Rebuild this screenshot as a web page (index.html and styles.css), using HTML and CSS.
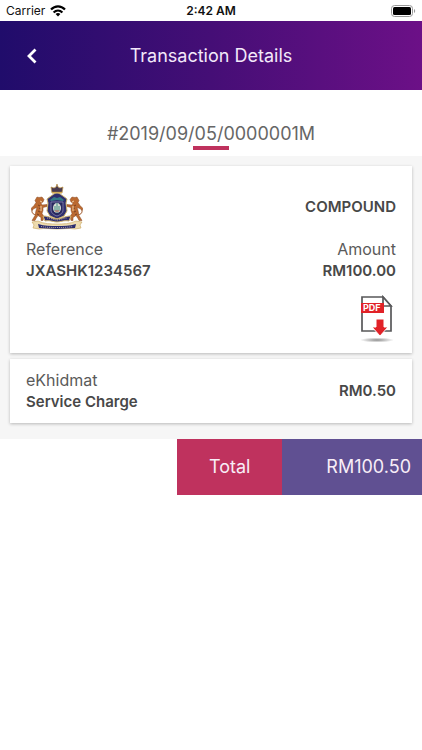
FILE: index.html
```html
<!DOCTYPE html>
<html lang="en">
<head>
    <meta charset="UTF-8">
    <meta name="viewport" content="width=device-width, initial-scale=1.0">
    <title>Transaction Details</title>
    <link rel="stylesheet" href="styles.css">
</head>
<body>
    <!-- Status bar -->
    <div class="status-bar">
        <div class="carrier">
            <span>Carrier</span>
            <svg width="16" height="12" viewBox="0 0 16 12" aria-hidden="true">
                <g fill="none" stroke="#000" stroke-width="2.2">
                    <path d="M1 4.6C5 .3 11 .3 15 4.6"/>
                    <path d="M3.6 7.5c2.6-2.6 6.2-2.6 8.8 0"/>
                </g>
                <path d="M8 11.5 5.6 9c1.4-1.2 3.4-1.2 4.8 0z"/>
            </svg>
        </div>
        <time class="clock">2:42 AM</time>
        <svg class="battery" width="25" height="12" viewBox="0 0 25 12" aria-hidden="true">
            <rect x=".5" y=".5" width="21" height="11" rx="3" fill="#fff" stroke="#999"/>
            <rect x="2" y="2" width="18" height="8" rx="1.5"/>
            <path d="M23 4c1.6.6 1.6 3.4 0 4z" fill="#999"/>
        </svg>
    </div>

    <!-- Header -->
    <header>
        <button class="back-btn" type="button" aria-label="Back">
            <svg width="12" height="16" viewBox="0 0 12 16" aria-hidden="true">
                <path d="M9.5 1.5 3 8l6.5 6.5" fill="none" stroke="#fff" stroke-width="2.8"/>
            </svg>
        </button>
        <h1>Transaction Details</h1>
    </header>

    <main>
        <h2 class="receipt-no">#2019/09/05/0000001M</h2>

        <section class="items">
            <!-- Compound card -->
            <article class="card">
                <div class="row">
                    <svg class="crest" width="52" height="50" viewBox="0 0 52 50" role="img" aria-label="Council crest">
                        <!-- crown -->
                        <path d="M20 5l3 1 2-1 1-3 1 3 2 1 3-1-1 6H21z" fill="#4a3b50" stroke="#bd9347" stroke-width=".7"/>
                        <path d="M21 10.5h10" stroke="#d6ac50" stroke-width="1.3"/>
                        <!-- tigers -->
                        <g id="tiger">
                            <path d="M5 33c-5-1-5-5-2-8" fill="none" stroke="#9d5425" stroke-width="1"/>
                            <path d="M6 15l2 .5 3-.5 2 2.5-1 2.500-2 1 1 2 5-.5 0 2-4 1 0 3-1 3 2 3-1 4-2 0 0-3-3-2-2 3-1 2-3 0 3-5 1-5 1-3-3 1-2 2-1-2 3-3 2-3-1-2z" fill="#bb6a31" stroke="#8a4b25" stroke-width=".5"/>
                            <path d="M7 23l2 1M8 26l2 1M7 29l2 1M6 32l2 1" stroke="#5a2f20" stroke-width=".7"/>
                            <path d="M9 19l2 1M10 24v5" fill="none" stroke="#f1cda0" stroke-width="1"/>
                        </g>
                        <use href="#tiger" transform="matrix(-1 0 0 1 52 0)"/>
                        <!-- shield -->
                        <path d="M26 11c3 0 4 2 6 3l4 3-1 4 1 8-3 5-7 3-7-3-3-5 1-8-1-4 4-3c2-1 3-3 6-3z" fill="#30306f" stroke="#d0b66c" stroke-width="1"/>
                        <path d="M19 18l4-3 3 1 3-1 4 3-1 1-6-1-6 1z" fill="#357c86"/>
                        <path d="M20 20h12v8c0 3-3 5-6 6-3-1-6-3-6-6z" fill="#29295f" stroke="#8b88b4" stroke-width=".8"/>
                        <ellipse cx="26" cy="26" rx="4" ry="5" fill="#d7ddd5"/>
                        <path d="M26 21v10M24 24v5M28 24v5" stroke="#418d81" stroke-width="1"/>
                        <path d="M24 29h4" stroke="#c45a4a" stroke-width="1"/>
                        <!-- ribbons -->
                        <path d="M12 34c7 0 9 3 14 3s7-3 14-3l-2 5c-6-1-8 1-12 1s-6-2-12-1z" fill="#2d2c6d" stroke="#d5b66e" stroke-width="1"/>
                        <path d="M1 40l6-1c6 3 13 3 19 3s13 0 19-3l6 1-2 3 1 3-6 1c-6-1-12 0-18 0s-12-1-18 0l-6-1 1-3z" fill="#eddbae" stroke="#c6a25b" stroke-width=".6"/>
                        <path d="M7 42c7 2 12 2 19 2s12 0 19-2l-1 4c-6 0-11 1-18 1s-12-1-18-1z" fill="#292b70"/>
                        <path d="M16 36c5 0 6 2 10 2s5-2 10-2M10 44.500c6 1 10 1 16 1s10 0 16-1" fill="none" stroke="#d8c7a5" stroke-width=".8" stroke-dasharray="1 1"/>
                    </svg>
                    <strong>COMPOUND</strong>
                </div>
                <div class="row details">
                    <p>Reference <strong>JXASHK1234567</strong></p>
                    <p class="amount">Amount <strong>RM100.00</strong></p>
                </div>
                <a class="pdf-link" href="#" aria-label="Download PDF receipt">
                    <svg width="34" height="48" viewBox="0 0 34 48" aria-hidden="true">
                        <defs>
                            <radialGradient id="shadow">
                                <stop offset="0" stop-color="#8c8c8c"/>
                                <stop offset="1" stop-color="#fff"/>
                            </radialGradient>
                        </defs>
                        <ellipse cx="17" cy="45" rx="17" ry="2.5" fill="url(#shadow)"/>
                        <path d="M2 2h21l8 9v25H2z" fill="#fff" stroke="#58585a" stroke-width="1.7"/>
                        <path d="M23 2v9h8z" fill="#fff" stroke="#58585a" stroke-width="1.7"/>
                        <path d="M1 8h23v10H1z" fill="#e12228"/>
                        <text class="pdf-text" x="3" y="16">PDF</text>
                        <path d="M16 24h8v8h4l-8 9-8-9h4z" fill="#e12228" stroke="#fff" stroke-width="1"/>
                    </svg>
                </a>
            </article>

            <!-- Service charge card -->
            <article class="card row service">
                <p>eKhidmat <strong>Service Charge</strong></p>
                <strong>RM0.50</strong>
            </article>
        </section>

        <!-- Total -->
        <div class="total">
            <span class="total-label">Total</span>
            <span class="total-amount">RM100.50</span>
        </div>
    </main>
</body>
</html>
```
FILE: styles.css
```css
* {
    box-sizing: border-box;
}

body {
    margin: 0;
    font-family: Inter, Roboto, sans-serif;
    font-size: 16px;
    line-height: 22px;
    color: #5a5a5a;
    background-color: #fff;
}

h1, h2, p {
    margin: 0;
    font-weight: 400;
}

strong {
    display: block;
    font-size: 15px;
    font-weight: 600;
    color: #484848;
}

svg {
    display: block;
}

.status-bar {
    display: grid;
    grid-template-columns: 1fr auto 1fr;
    align-items: center;
    height: 21px;
    padding: 0 6px;
    font-size: 12px;
    color: #111;
}

.carrier {
    display: flex;
    align-items: center;
    gap: 5px;
}

.clock {
    font-weight: 600;
}

.battery {
    justify-self: end;
}

header {
    display: grid;
    grid-template-columns: 64px 1fr 64px;
    align-items: center;
    height: 69px;
    color: #f3e9fa;
    background: linear-gradient(to right, #200c6b, #450e76 50%, #6c1087);
}

.back-btn {
    display: flex;
    align-items: center;
    justify-content: center;
    height: 44px;
    padding: 0;
    border: none;
    background: none;
    cursor: pointer;
}

h1 {
    font-size: 18px;
    text-align: center;
}

.receipt-no {
    display: flex;
    flex-direction: column;
    align-items: center;
    padding: 32px 0 6px;
    font-size: 18px;
    line-height: 24px;
    color: #666;
}

.receipt-no::after {
    content: "";
    width: 36px;
    height: 4px;
    background-color: #bf325e;
}

.items {
    display: flex;
    flex-direction: column;
    gap: 6px;
    padding: 10px 10px 16px;
    background-color: #f6f6f6;
}

.card {
    padding: 16px;
    background-color: #fff;
    box-shadow: 0 1px 3px rgba(0, 0, 0, 0.25);
}

.row {
    display: flex;
    align-items: center;
    justify-content: space-between;
}

.crest {
    margin-left: 5px;
}

.details {
    padding-top: 6px;
}

.amount {
    text-align: right;
}

.pdf-link {
    display: block;
    width: 34px;
    margin: 13px 2px -6px auto;
}

.pdf-text {
    font-size: 9px;
    font-weight: 700;
    fill: #fff;
}

.service {
    padding: 10px 16px;
}

.total {
    display: grid;
    grid-template-columns: 3fr 4fr;
    width: 58%;
    margin-left: auto;
    font-size: 18px;
    line-height: 56px;
    color: #f8edf7;
}

.total-label {
    text-align: center;
    background-color: #bf325e;
}

.total-amount {
    padding-right: 11px;
    text-align: right;
    background-color: #605092;
}
```
